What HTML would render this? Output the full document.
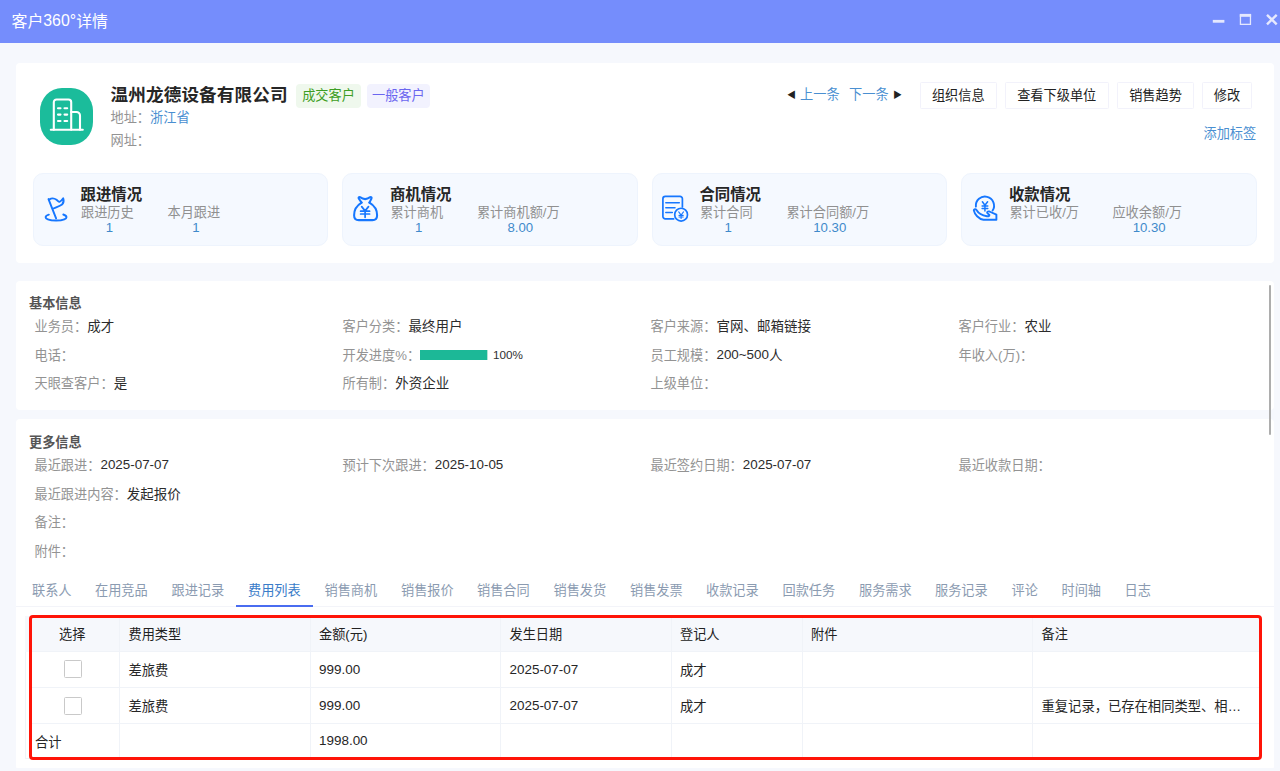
<!DOCTYPE html>
<html lang="zh-CN">
<head>
<meta charset="utf-8">
<title>客户360°详情</title>
<style>
*{box-sizing:border-box;margin:0;padding:0}
html,body{width:1280px;height:771px;overflow:hidden}
body{font-family:"Liberation Sans","Noto Sans CJK SC",sans-serif;font-size:13.2px;color:#222;background:#f6f8fd;position:relative}
.abs{position:absolute;white-space:nowrap}
.titlebar{position:absolute;left:0;top:0;width:1280px;height:43px;background:#758dfc}
.titlebar .t{position:absolute;left:11.500px;top:0;line-height:44px;font-size:15.900px;color:#fff}
.card{position:absolute;background:#fff;border-radius:4px}
.logo{position:absolute;left:40px;top:87.700px;width:53.300px;height:57px;background:#1bbc9b;border-radius:22px/23px;overflow:hidden}
.name{position:absolute;left:110.5px;top:82px;font-size:17.6px;letter-spacing:.13px;font-weight:bold;line-height:26px;color:#262626;white-space:nowrap}
.tag{position:absolute;top:84px;height:23.5px;line-height:23px;font-size:13.2px;border-radius:4px;text-align:center;white-space:nowrap}
.lbl{color:#909090}
.lnk{color:#4a8fd1}
.btn{position:absolute;top:82px;height:27px;line-height:25.500px;border:1px solid #f2f2fb;border-radius:1.500px;background:#fff;text-align:center;font-size:13.2px;color:#222;white-space:nowrap}
.stat{position:absolute;top:173px;width:295.300px;height:72.500px;background:#f5f9ff;border:1px solid #eef4fd;border-radius:10px}
.stat .h{position:absolute;left:46.500px;top:10.500px;font-size:15.4px;font-weight:bold;line-height:20px;color:#262626;white-space:nowrap}
.stat .c{position:absolute;top:30px;text-align:center;white-space:nowrap;line-height:16px}
.stat .c .l{color:#909090;font-size:13.2px;display:block;position:relative;top:1px}
.stat .c .v{color:#3f8acb;font-size:13.2px;display:block;line-height:16px;padding-left:4px}
.stat svg{position:absolute}
.sec{position:absolute;left:29px;font-weight:bold;color:#555;font-size:13.2px;line-height:16px;white-space:nowrap}
.f{position:absolute;line-height:18px;white-space:nowrap;font-size:13.2px}
.f b{font-weight:normal;color:#939393}
.tab{position:absolute;top:582px;line-height:18px;font-size:13.2px;color:#8b9bb1;white-space:nowrap}
.tab.on{color:#3a7cc9}
.th,.td{position:absolute;white-space:nowrap;font-size:13.2px;line-height:18px;color:#222}
.td{font-size:13.300px;color:#262626}
.td.d{font-size:13.450px}
.vl{position:absolute;width:1px;background:#f0f3f8}
.hl{position:absolute;height:1px;background:#f0f3f8}
.n{position:relative;top:-1px;font-size:13.400px}
.val{font-size:13.500px;color:#2c2c2c}
.cb{position:absolute;left:64px;width:17.800px;height:17.800px;border:1px solid #c9c9c9;border-radius:1.500px;background:#fff}
</style>
</head>
<body>
<div class="titlebar"><div class="t">客户<span style="position:relative;top:-1px">360°</span>详情</div>
<svg class="abs" style="left:1208px;top:10px" width="72" height="20" viewBox="0 0 72 20"><rect x="4.800" y="9.900" width="11.600" height="2.800" fill="#e4e8fe"/><rect x="32.450" y="5" width="10" height="9.350" fill="none" stroke="#e4e8fe" stroke-width="1.300"/><rect x="31.800" y="3.900" width="11.300" height="2.900" fill="#e4e8fe"/><path d="M59 4.800 L68.700 14.300 M68.700 4.800 L59 14.300" stroke="#e6e9fe" stroke-width="2.400" fill="none"/></svg>
</div>

<!-- top card -->
<div class="card" style="left:16px;top:63px;width:1258px;height:199.5px"></div>
<div class="logo"><svg width="54" height="58" viewBox="0 0 54 58"><g fill="none" stroke="#fff" stroke-width="2.1" stroke-linecap="round" stroke-linejoin="round"><path d="M10.800 41.700 H42.800"/><path d="M13.800 41.700 V14.200 a2.700 2.700 0 0 1 2.700 -2.700 H28.500 a2.700 2.700 0 0 1 2.700 2.700 V41.700"/><path d="M31.200 24 H36.400 a3.600 3.600 0 0 1 3.600 3.600 V41.700"/><path d="M18 20.200 H20.500 M24.500 20.200 H27.200 M18 26.600 H20.500 M24.500 26.600 H27.200 M18 33 H20.500 M24.500 33 H27.200"/></g></svg></div>
<div class="name">温州龙德设备有限公司</div>
<div class="tag" style="left:296px;width:65px;background:#eff8ed;color:#3d9e24">成交客户</div>
<div class="tag" style="left:366.500px;width:63.700px;background:#f2f2fe;color:#6b66f0">一般客户</div>
<div class="f" style="left:110.500px;top:109px"><b>地址：</b><span class="lnk" style="margin-left:0">浙江省</span></div>
<div class="f" style="left:110.500px;top:132px"><b>网址：</b></div>

<div class="f" style="left:787px;top:85.500px;color:#222"><span style="font-size:9px;position:relative;top:-1px">◀</span><span class="lnk" style="margin-left:4px">上一条</span><span class="lnk" style="margin-left:9.500px">下一条</span><span style="font-size:9px;margin-left:4.300px;position:relative;top:-1px">▶</span></div>
<div class="btn" style="left:920px;width:76.500px">组织信息</div>
<div class="btn" style="left:1005px;width:103.500px">查看下级单位</div>
<div class="btn" style="left:1117px;width:77px">销售趋势</div>
<div class="btn" style="left:1202px;width:50px">修改</div>
<div class="f lnk" style="left:1203.500px;top:125px">添加标签</div>

<!-- stats -->
<div class="stat" style="left:33px">
  <svg style="left:2.400px;top:6.900px" width="50" height="60" viewBox="0 0 50 60"><g fill="none" stroke="#1677ff" stroke-width="1.900" stroke-linecap="round" stroke-linejoin="round"><path d="M12.500 18.100 L20.100 37.400"/><path d="M13.200 18.600 C15.500 17 18.500 17.300 20.500 18.800 C22 20 23 21 23.600 20.800 C25 20.300 26.300 18.500 27.200 17.200 C28 19.500 27.500 22 26 23.600 C24 25.200 20 26.300 17.300 27.500"/><path d="M12.850 33.600 C10.600 34.300 9.600 35.300 9.600 36.300 C9.600 38.200 14.300 39.500 20.100 39.500 C25.900 39.500 30.500 38.200 30.500 36.300 C30.500 35.200 29.400 34.200 27.300 33.500"/></g></svg>
  <div class="h">跟进情况</div>
  <div class="c" style="left:47px"><span class="l">跟进历史</span><span class="v">1</span></div>
  <div class="c" style="left:133.500px"><span class="l">本月跟进</span><span class="v">1</span></div>
</div>
<div class="stat" style="left:342.400px">
  <svg style="left:2.500px;top:6px" width="50" height="60" viewBox="0 0 50 60"><g fill="none" stroke="#1677ff" stroke-width="2.050" stroke-linecap="round" stroke-linejoin="round"><path d="M15.600 22.600 L12.700 18.500 C12.300 17.400 13 16.900 14 17.200 C16 18.600 17.500 19.100 19.100 19.100 C20.700 19.100 22.200 18.600 24.200 17.200 C25.200 16.900 25.900 17.400 25.500 18.500 L23.400 22.600"/><path d="M15.600 22.600 C10.800 25.500 8.100 30.500 8.100 35.200 C8.100 38.500 10 40.100 12.800 40.100 H26.400 C29.200 40.100 31.100 38.500 31.100 35.200 C31.100 30.500 28.400 25.500 23.400 22.600"/><path d="M15.700 26.600 L19.100 30.900 L22.500 26.600 M19.100 30.900 V37.300 M14.600 31.200 H23.600 M14.600 34 H23.600" stroke-width="1.700"/></g></svg>
  <div class="h">商机情况</div>
  <div class="c" style="left:47px"><span class="l">累计商机</span><span class="v">1</span></div>
  <div class="c" style="left:133.500px"><span class="l">累计商机额/万</span><span class="v">8.00</span></div>
</div>
<div class="stat" style="left:651.900px">
  <svg style="left:3px;top:6px" width="50" height="60" viewBox="0 0 50 60"><g fill="none" stroke="#1677ff" stroke-width="1.700" stroke-linecap="round" stroke-linejoin="round"><path d="M17.600 38.900 H9.300 a2.400 2.400 0 0 1 -2.400 -2.400 V18.800 a2.400 2.400 0 0 1 2.400 -2.400 H24 a2.400 2.400 0 0 1 2.400 2.400 V27"/><path d="M9.800 22.700 H23.300 M9.800 27.650 H19 M9.800 32.550 H16.300" stroke-width="1.500"/><circle cx="25.100" cy="34.650" r="6.400"/><path d="M22.700 31.900 L25.100 35 L27.500 31.900 M25.100 35 V38.400 M23 35.400 H27.200 M23 37 H27.200" stroke-width="1.100"/></g></svg>
  <div class="h">合同情况</div>
  <div class="c" style="left:47px"><span class="l">累计合同</span><span class="v">1</span></div>
  <div class="c" style="left:133.500px"><span class="l">累计合同额/万</span><span class="v">10.30</span></div>
</div>
<div class="stat" style="left:961.400px">
  <svg style="left:3.500px;top:6px" width="50" height="60" viewBox="0 0 50 60"><g fill="none" stroke="#1677ff" stroke-width="1.900" stroke-linecap="round" stroke-linejoin="round"><path d="M9.900 26.600 A9.100 9.100 0 1 1 26.600 30.600"/><path d="M16.400 21.800 L18.930 25.300 L21.600 21.800 M18.930 25.300 V31.100 M16.100 26.100 H21.800 M16.100 28.400 H21.800" stroke-width="1.500"/><path d="M7.800 30.400 C8.600 34.300 12.500 38.900 17.500 39.700 L30.400 39.700 L30.400 34.700 L23.400 31.500 C21.800 31.100 20.600 31.900 21.400 33.100 L23.400 35 C23.400 36.200 22.600 36.400 21 36.200 C16.400 35.400 12.500 33.500 10.500 30 C9.700 28.800 7.800 29 7.800 30.400 Z"/></g></svg>
  <div class="h">收款情况</div>
  <div class="c" style="left:47px"><span class="l">累计已收/万</span><span class="v">&nbsp;</span></div>
  <div class="c" style="left:150px"><span class="l">应收余额/万</span><span class="v">10.30</span></div>
</div>

<!-- basic info card -->
<div class="card" style="left:16px;top:280.500px;width:1258px;height:129.500px"></div>
<div class="sec" style="top:296px">基本信息</div>
<div class="f" style="left:34.500px;top:318px"><b>业务员：</b><span class="val">成才</span></div>
<div class="f" style="left:34.500px;top:346.5px"><b>电话：</b></div>
<div class="f" style="left:34.500px;top:375px"><b>天眼查客户：</b><span class="val">是</span></div>
<div class="f" style="left:342.500px;top:318px"><b>客户分类：</b><span class="val">最终用户</span></div>
<div class="f" style="left:342.500px;top:346.5px"><b>开发进度%：</b></div>
<div class="abs" style="left:420px;top:350px;width:67px;height:9.500px;background:#1cb897"></div>
<div class="abs" style="left:487px;top:350px;width:1px;height:9.500px;background:#b4e3d6"></div>
<div class="f" style="left:493px;top:346.300px;font-size:11.700px;color:#303030">100%</div>
<div class="f" style="left:342.500px;top:375px"><b>所有制：</b><span class="val">外资企业</span></div>
<div class="f" style="left:650.500px;top:318px"><b>客户来源：</b><span class="val">官网、邮箱链接</span></div>
<div class="f" style="left:650.500px;top:346.5px"><b>员工规模：</b><span class="val"><span class="n">200~500</span>人</span></div>
<div class="f" style="left:650.500px;top:375px"><b>上级单位：</b></div>
<div class="f" style="left:958.500px;top:318px"><b>客户行业：</b><span class="val">农业</span></div>
<div class="f" style="left:958.500px;top:346.5px"><b>年收入(万)：</b></div>

<!-- more info card -->
<div class="card" style="left:16px;top:419px;width:1258px;height:349px;border-radius:4px 4px 1px 1px"></div>
<div class="sec" style="top:435px">更多信息</div>
<div class="f" style="left:34.500px;top:457px"><b>最近跟进：</b><span class="val"><span class="n">2025-07-07</span></span></div>
<div class="f" style="left:34.500px;top:485.5px"><b>最近跟进内容：</b><span class="val">发起报价</span></div>
<div class="f" style="left:34.500px;top:514px"><b>备注：</b></div>
<div class="f" style="left:34.500px;top:542.5px"><b>附件：</b></div>
<div class="f" style="left:342.500px;top:457px"><b>预计下次跟进：</b><span class="val"><span class="n">2025-10-05</span></span></div>
<div class="f" style="left:650.500px;top:457px"><b>最近签约日期：</b><span class="val"><span class="n">2025-07-07</span></span></div>
<div class="f" style="left:958.500px;top:457px"><b>最近收款日期：</b></div>

<!-- scrollbar -->
<div class="abs" style="left:1268.800px;top:285px;width:2.300px;height:149.600px;background:#adadad;border-radius:1px"></div>

<!-- tabs -->
<div class="hl" style="left:16px;top:606px;width:1258px;background:#f3f4f9"></div>
<div class="tab" style="left:32px">联系人</div>
<div class="tab" style="left:95px">在用竞品</div>
<div class="tab" style="left:171.500px">跟进记录</div>
<div class="tab on" style="left:248px">费用列表</div>
<div class="tab" style="left:324.500px">销售商机</div>
<div class="tab" style="left:401px">销售报价</div>
<div class="tab" style="left:477px">销售合同</div>
<div class="tab" style="left:553.500px">销售发货</div>
<div class="tab" style="left:630px">销售发票</div>
<div class="tab" style="left:706px">收款记录</div>
<div class="tab" style="left:782.500px">回款任务</div>
<div class="tab" style="left:859px">服务需求</div>
<div class="tab" style="left:935px">服务记录</div>
<div class="tab" style="left:1011.500px">评论</div>
<div class="tab" style="left:1061.500px">时间轴</div>
<div class="tab" style="left:1124.500px">日志</div>
<div class="abs" style="left:235.500px;top:605px;width:77.500px;height:2px;background:#4a6cf0"></div>

<!-- table -->
<div class="abs" style="left:25px;top:616px;width:1234px;height:143px;border-left:1px solid #f0f3f8;border-bottom:1px solid #f0f3f8"></div>
<div class="abs" style="left:25px;top:616px;width:1234px;height:35.500px;background:#f6f8fc"></div>
<div class="hl" style="left:32px;top:651px;width:1227px"></div>
<div class="hl" style="left:32px;top:687px;width:1227px"></div>
<div class="hl" style="left:32px;top:723px;width:1227px"></div>
<div class="vl" style="left:119px;top:618px;height:139px"></div>
<div class="vl" style="left:309.500px;top:618px;height:139px"></div>
<div class="vl" style="left:500px;top:618px;height:139px"></div>
<div class="vl" style="left:671px;top:618px;height:139px"></div>
<div class="vl" style="left:802px;top:618px;height:139px"></div>
<div class="vl" style="left:1032px;top:618px;height:139px"></div>

<div class="th" style="left:59px;top:625.500px">选择</div>
<div class="th" style="left:128.500px;top:625.500px">费用类型</div>
<div class="th" style="left:319px;top:625.500px">金额(元)</div>
<div class="th" style="left:509.500px;top:625.500px">发生日期</div>
<div class="th" style="left:680px;top:625.500px">登记人</div>
<div class="th" style="left:811px;top:625.500px">附件</div>
<div class="th" style="left:1041.500px;top:625.500px">备注</div>

<div class="cb" style="top:660.400px"></div>
<div class="td" style="left:128.500px;top:662.25px">差旅费</div>
<div class="td d" style="left:319px;top:661px">999.00</div>
<div class="td d" style="left:509.500px;top:661px">2025-07-07</div>
<div class="td" style="left:680px;top:662.25px">成才</div>

<div class="cb" style="top:697px"></div>
<div class="td" style="left:128.500px;top:698.25px">差旅费</div>
<div class="td d" style="left:319px;top:697px">999.00</div>
<div class="td d" style="left:509.500px;top:697px">2025-07-07</div>
<div class="td" style="left:680px;top:698.25px">成才</div>
<div class="td" style="left:1041.500px;top:698.25px">重复记录，已存在相同类型、相…</div>

<div class="td" style="left:35px;top:733.5px">合计</div>
<div class="td d" style="left:319px;top:732px">1998.00</div>

<!-- red highlight -->
<div class="abs" style="left:29px;top:614.500px;width:1233px;height:145px;border:3.500px solid #ff1408;border-radius:4px"></div>
</body>
</html>
